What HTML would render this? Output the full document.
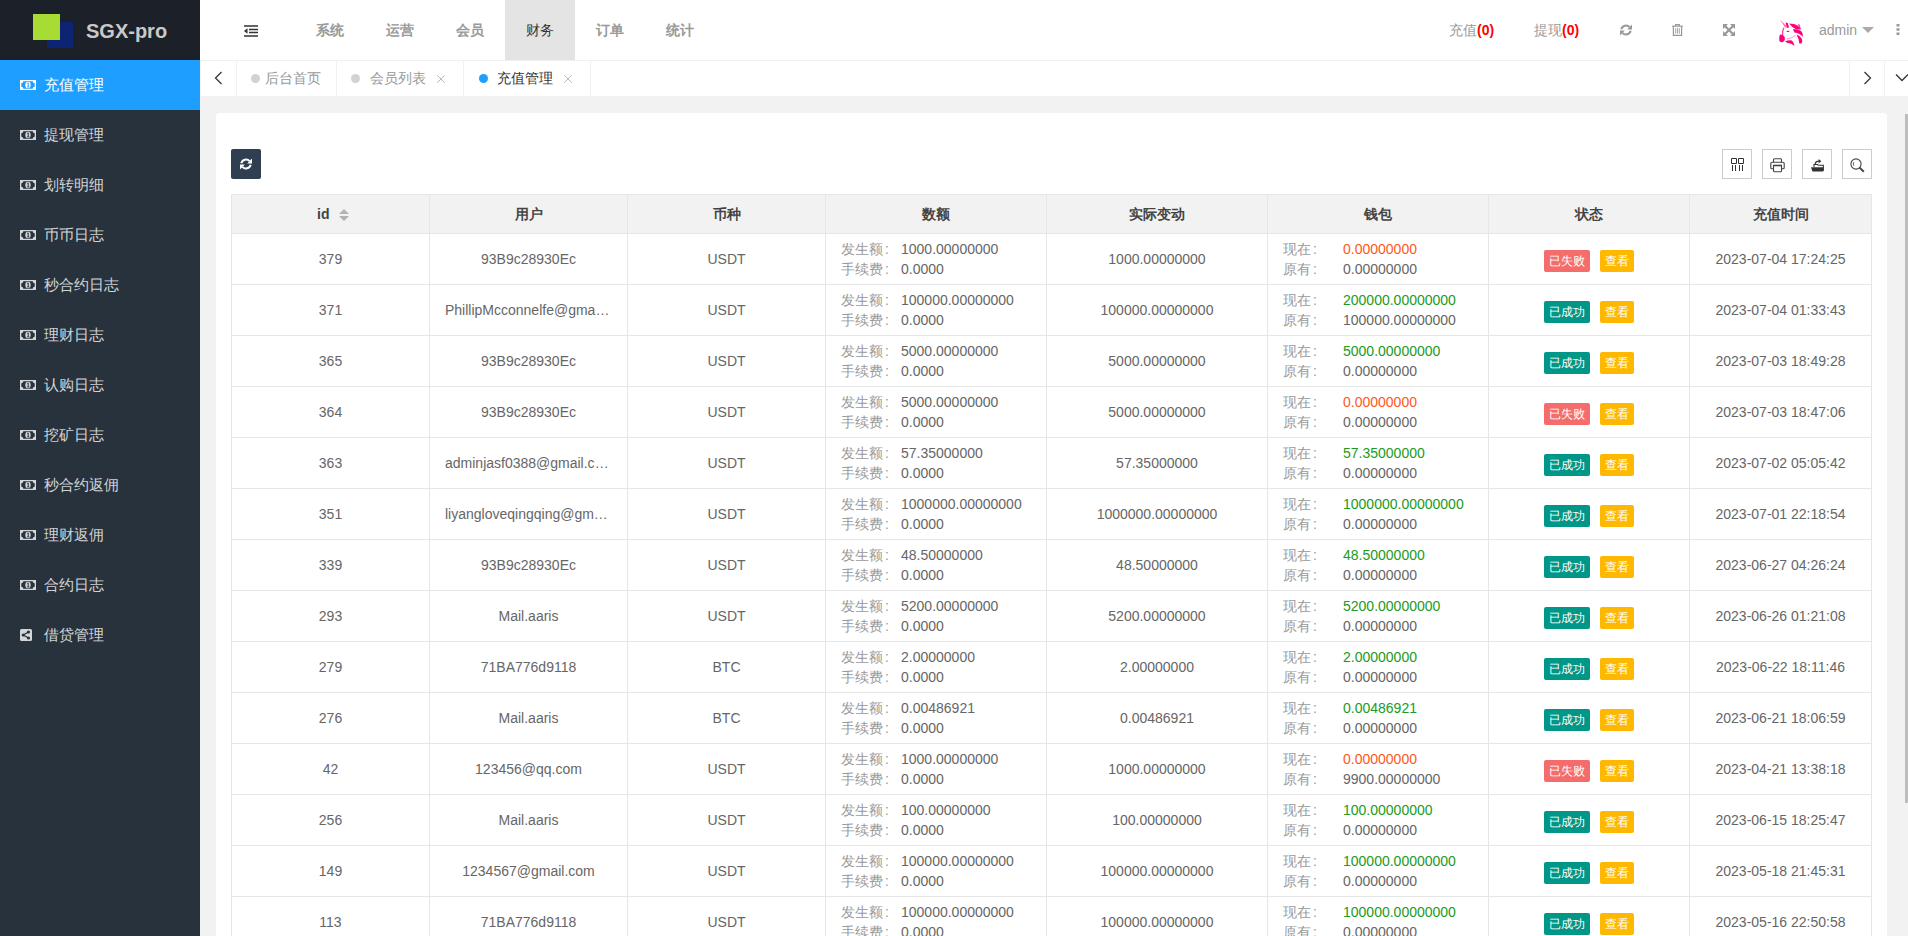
<!DOCTYPE html>
<html><head><meta charset="utf-8"><title>SGX-pro</title>
<style>
*{box-sizing:border-box;margin:0;padding:0}
html,body{width:1908px;height:936px;overflow:hidden;background:#f2f2f2;font-family:"Liberation Sans",sans-serif;font-size:14px;color:#666}
.abs{position:absolute}
#side{position:absolute;left:0;top:0;width:200px;height:936px;background:#28323c}
#logo{position:absolute;left:0;top:0;width:200px;height:60px;background:#1b2029}
#logo .sq1{position:absolute;left:47px;top:22px;width:26px;height:26px;background:#0c2471}
#logo .sq2{position:absolute;left:33px;top:14px;width:27px;height:26px;background:#a6dc33}
#logo .t{position:absolute;left:86px;top:19px;font-size:20px;font-weight:bold;color:#c9c9c9;line-height:24px}
.mitem{position:absolute;left:0;width:200px;height:50px;color:rgba(255,255,255,.8);--bg:#28323c}
.mitem.on{background:#1e9fff;color:#fff;--bg:#1e9fff}
.mitem .mi{position:absolute;left:20px;top:20px}
.mitem .share{left:20px;top:19px}
.mitem span{position:absolute;left:44px;top:15px;line-height:20px;font-size:15px}
#head{position:absolute;left:200px;top:0;width:1708px;height:60px;background:#fff}
.nav{position:absolute;top:0;height:60px;width:70px;text-align:center;line-height:60px;color:#999;font-size:14px;font-weight:bold}
.nav.on{background:#e4e4e4;color:#333;font-weight:normal}
#tabs{position:absolute;left:200px;top:60px;width:1708px;height:36px;background:#fff;border-top:1px solid #f0f0f0}
.tab{position:absolute;top:0;height:35px;border-right:1px solid #f0f0f0;line-height:35px;color:#999;font-size:14px}
.dot{position:absolute;top:13px;width:9px;height:9px;border-radius:50%;background:#d2d2d2}
#card{position:absolute;left:216px;top:113px;width:1671px;height:900px;background:#fff;border-radius:4px}
.tb{position:absolute;top:149px;width:30px;height:30px;border:1px solid #ccc;background:#fff}
.hl{position:absolute;height:1px;background:#e6e6e6}
.vl{position:absolute;width:1px;background:#e6e6e6}
.th{position:absolute;top:195px;height:38px;line-height:38px;text-align:center;font-weight:bold;color:#444}
.c{position:absolute;text-align:center;line-height:20px;color:#666;white-space:nowrap;overflow:hidden;text-overflow:ellipsis}
.lb{position:absolute;line-height:20px;color:#999;white-space:nowrap}
.vv{position:absolute;line-height:20px;color:#666;white-space:nowrap}
.red{color:#ff5722}.grn{color:#229a22}
.co{font-style:normal;margin-left:2px}
.bdg{position:absolute;height:22px;line-height:22px;border-radius:2px;color:#fff;font-size:12px;text-align:center}
</style></head><body>

<div id="side"><div id="logo"><div class="sq1"></div><div class="sq2"></div><div class="t">SGX-pro</div></div>
<div class="mitem on" style="top:60px"><svg class="mi" width="16" height="10" viewBox="0 0 16 10"><rect x="0" y="0" width="16" height="10" fill="currentColor"/><path d="M3.3 1.3 H12.7 A2 2 0 0 0 14.7 3.3 V6.7 A2 2 0 0 0 12.7 8.7 H3.3 A2 2 0 0 0 1.3 6.7 V3.3 A2 2 0 0 0 3.3 1.3 Z" fill="var(--bg)"/><ellipse cx="8" cy="5" rx="2.7" ry="3.2" fill="currentColor"/><path d="M7.2 3.4 L8.2 2.9 V6.8 M7.1 6.9 H9.3" stroke="var(--bg)" stroke-width="1" fill="none"/></svg><span>充值管理</span></div>
<div class="mitem" style="top:110px"><svg class="mi" width="16" height="10" viewBox="0 0 16 10"><rect x="0" y="0" width="16" height="10" fill="currentColor"/><path d="M3.3 1.3 H12.7 A2 2 0 0 0 14.7 3.3 V6.7 A2 2 0 0 0 12.7 8.7 H3.3 A2 2 0 0 0 1.3 6.7 V3.3 A2 2 0 0 0 3.3 1.3 Z" fill="var(--bg)"/><ellipse cx="8" cy="5" rx="2.7" ry="3.2" fill="currentColor"/><path d="M7.2 3.4 L8.2 2.9 V6.8 M7.1 6.9 H9.3" stroke="var(--bg)" stroke-width="1" fill="none"/></svg><span>提现管理</span></div>
<div class="mitem" style="top:160px"><svg class="mi" width="16" height="10" viewBox="0 0 16 10"><rect x="0" y="0" width="16" height="10" fill="currentColor"/><path d="M3.3 1.3 H12.7 A2 2 0 0 0 14.7 3.3 V6.7 A2 2 0 0 0 12.7 8.7 H3.3 A2 2 0 0 0 1.3 6.7 V3.3 A2 2 0 0 0 3.3 1.3 Z" fill="var(--bg)"/><ellipse cx="8" cy="5" rx="2.7" ry="3.2" fill="currentColor"/><path d="M7.2 3.4 L8.2 2.9 V6.8 M7.1 6.9 H9.3" stroke="var(--bg)" stroke-width="1" fill="none"/></svg><span>划转明细</span></div>
<div class="mitem" style="top:210px"><svg class="mi" width="16" height="10" viewBox="0 0 16 10"><rect x="0" y="0" width="16" height="10" fill="currentColor"/><path d="M3.3 1.3 H12.7 A2 2 0 0 0 14.7 3.3 V6.7 A2 2 0 0 0 12.7 8.7 H3.3 A2 2 0 0 0 1.3 6.7 V3.3 A2 2 0 0 0 3.3 1.3 Z" fill="var(--bg)"/><ellipse cx="8" cy="5" rx="2.7" ry="3.2" fill="currentColor"/><path d="M7.2 3.4 L8.2 2.9 V6.8 M7.1 6.9 H9.3" stroke="var(--bg)" stroke-width="1" fill="none"/></svg><span>币币日志</span></div>
<div class="mitem" style="top:260px"><svg class="mi" width="16" height="10" viewBox="0 0 16 10"><rect x="0" y="0" width="16" height="10" fill="currentColor"/><path d="M3.3 1.3 H12.7 A2 2 0 0 0 14.7 3.3 V6.7 A2 2 0 0 0 12.7 8.7 H3.3 A2 2 0 0 0 1.3 6.7 V3.3 A2 2 0 0 0 3.3 1.3 Z" fill="var(--bg)"/><ellipse cx="8" cy="5" rx="2.7" ry="3.2" fill="currentColor"/><path d="M7.2 3.4 L8.2 2.9 V6.8 M7.1 6.9 H9.3" stroke="var(--bg)" stroke-width="1" fill="none"/></svg><span>秒合约日志</span></div>
<div class="mitem" style="top:310px"><svg class="mi" width="16" height="10" viewBox="0 0 16 10"><rect x="0" y="0" width="16" height="10" fill="currentColor"/><path d="M3.3 1.3 H12.7 A2 2 0 0 0 14.7 3.3 V6.7 A2 2 0 0 0 12.7 8.7 H3.3 A2 2 0 0 0 1.3 6.7 V3.3 A2 2 0 0 0 3.3 1.3 Z" fill="var(--bg)"/><ellipse cx="8" cy="5" rx="2.7" ry="3.2" fill="currentColor"/><path d="M7.2 3.4 L8.2 2.9 V6.8 M7.1 6.9 H9.3" stroke="var(--bg)" stroke-width="1" fill="none"/></svg><span>理财日志</span></div>
<div class="mitem" style="top:360px"><svg class="mi" width="16" height="10" viewBox="0 0 16 10"><rect x="0" y="0" width="16" height="10" fill="currentColor"/><path d="M3.3 1.3 H12.7 A2 2 0 0 0 14.7 3.3 V6.7 A2 2 0 0 0 12.7 8.7 H3.3 A2 2 0 0 0 1.3 6.7 V3.3 A2 2 0 0 0 3.3 1.3 Z" fill="var(--bg)"/><ellipse cx="8" cy="5" rx="2.7" ry="3.2" fill="currentColor"/><path d="M7.2 3.4 L8.2 2.9 V6.8 M7.1 6.9 H9.3" stroke="var(--bg)" stroke-width="1" fill="none"/></svg><span>认购日志</span></div>
<div class="mitem" style="top:410px"><svg class="mi" width="16" height="10" viewBox="0 0 16 10"><rect x="0" y="0" width="16" height="10" fill="currentColor"/><path d="M3.3 1.3 H12.7 A2 2 0 0 0 14.7 3.3 V6.7 A2 2 0 0 0 12.7 8.7 H3.3 A2 2 0 0 0 1.3 6.7 V3.3 A2 2 0 0 0 3.3 1.3 Z" fill="var(--bg)"/><ellipse cx="8" cy="5" rx="2.7" ry="3.2" fill="currentColor"/><path d="M7.2 3.4 L8.2 2.9 V6.8 M7.1 6.9 H9.3" stroke="var(--bg)" stroke-width="1" fill="none"/></svg><span>挖矿日志</span></div>
<div class="mitem" style="top:460px"><svg class="mi" width="16" height="10" viewBox="0 0 16 10"><rect x="0" y="0" width="16" height="10" fill="currentColor"/><path d="M3.3 1.3 H12.7 A2 2 0 0 0 14.7 3.3 V6.7 A2 2 0 0 0 12.7 8.7 H3.3 A2 2 0 0 0 1.3 6.7 V3.3 A2 2 0 0 0 3.3 1.3 Z" fill="var(--bg)"/><ellipse cx="8" cy="5" rx="2.7" ry="3.2" fill="currentColor"/><path d="M7.2 3.4 L8.2 2.9 V6.8 M7.1 6.9 H9.3" stroke="var(--bg)" stroke-width="1" fill="none"/></svg><span>秒合约返佣</span></div>
<div class="mitem" style="top:510px"><svg class="mi" width="16" height="10" viewBox="0 0 16 10"><rect x="0" y="0" width="16" height="10" fill="currentColor"/><path d="M3.3 1.3 H12.7 A2 2 0 0 0 14.7 3.3 V6.7 A2 2 0 0 0 12.7 8.7 H3.3 A2 2 0 0 0 1.3 6.7 V3.3 A2 2 0 0 0 3.3 1.3 Z" fill="var(--bg)"/><ellipse cx="8" cy="5" rx="2.7" ry="3.2" fill="currentColor"/><path d="M7.2 3.4 L8.2 2.9 V6.8 M7.1 6.9 H9.3" stroke="var(--bg)" stroke-width="1" fill="none"/></svg><span>理财返佣</span></div>
<div class="mitem" style="top:560px"><svg class="mi" width="16" height="10" viewBox="0 0 16 10"><rect x="0" y="0" width="16" height="10" fill="currentColor"/><path d="M3.3 1.3 H12.7 A2 2 0 0 0 14.7 3.3 V6.7 A2 2 0 0 0 12.7 8.7 H3.3 A2 2 0 0 0 1.3 6.7 V3.3 A2 2 0 0 0 3.3 1.3 Z" fill="var(--bg)"/><ellipse cx="8" cy="5" rx="2.7" ry="3.2" fill="currentColor"/><path d="M7.2 3.4 L8.2 2.9 V6.8 M7.1 6.9 H9.3" stroke="var(--bg)" stroke-width="1" fill="none"/></svg><span>合约日志</span></div>
<div class="mitem" style="top:610px"><svg class="mi share" width="12" height="12" viewBox="0 0 12 12"><rect x="0" y="0" width="12" height="12" rx="1.5" fill="currentColor"/><circle cx="3.2" cy="6" r="1.6" fill="var(--bg)"/><circle cx="8.5" cy="3" r="1.6" fill="var(--bg)"/><circle cx="8.5" cy="9" r="1.6" fill="var(--bg)"/><path d="M3.2 6 L8.5 3 M3.2 6 L8.5 9" stroke="var(--bg)" stroke-width="1.2"/></svg><span>借贷管理</span></div>
</div>
<div id="head">
<svg class="abs" style="left:43px;top:25px" width="16" height="12" viewBox="0 0 16 12"><path d="M1 1H15M6 4.5H15M6 7.5H15M1 11H15" stroke="#333" stroke-width="1.6"/><path d="M4.5 3.3 L1 6 L4.5 8.7Z" fill="#333"/></svg>
<div class="nav" style="left:95px">系统</div>
<div class="nav" style="left:165px">运营</div>
<div class="nav" style="left:235px">会员</div>
<div class="nav on" style="left:305px">财务</div>
<div class="nav" style="left:375px">订单</div>
<div class="nav" style="left:445px">统计</div>
<div class="abs" style="left:1249px;top:20px;line-height:20px;color:#999">充值<b style="color:#ff0000">(0)</b></div>
<div class="abs" style="left:1334px;top:20px;line-height:20px;color:#999">提现<b style="color:#ff0000">(0)</b></div>
<svg class="abs" style="left:1420px;top:24px" width="12" height="12" viewBox="0 0 12 12"><path d="M1.3 5.2 A4.8 4.8 0 0 1 9.6 3.2" stroke="#999" stroke-width="2" fill="none"/><path d="M12 0.6 V5.4 H7.2Z" fill="#999"/><path d="M10.7 6.8 A4.8 4.8 0 0 1 2.4 8.8" stroke="#999" stroke-width="2" fill="none"/><path d="M0 11.4 V6.6 H4.8Z" fill="#999"/></svg>
<svg class="abs" style="left:1472px;top:24px" width="11" height="12" viewBox="0 0 11 12"><path d="M0 2.2 H11" stroke="#999" stroke-width="1.2"/><path d="M3.6 2 V0.6 H7.4 V2" stroke="#999" stroke-width="1.1" fill="none"/><path d="M1.4 2.6 V11.4 H9.6 V2.6" stroke="#999" stroke-width="1.2" fill="none"/><path d="M3.7 4.2 V9.6 M5.5 4.2 V9.6 M7.3 4.2 V9.6" stroke="#999" stroke-width="0.9"/></svg>
<svg class="abs" style="left:1523px;top:24px" width="12" height="12" viewBox="0 0 12 12"><path d="M0 0 H5 L0 5Z M12 0 V5 L7 0Z M12 12 H7 L12 7Z M0 12 V7 L5 12Z" fill="#999"/><path d="M1.5 1.5 L10.5 10.5 M10.5 1.5 L1.5 10.5" stroke="#999" stroke-width="2.2"/></svg>
<svg class="abs" style="left:1575px;top:15px" width="35" height="35" viewBox="0 0 35 35" fill="#ff007a">
<path d="M4.8 4.6 L11.8 11.2 L10.2 12.8Z" opacity=".55"/>
<path d="M10.6 7.6 L12.8 8 L14 12.4 L11.9 13Z"/>
<path d="M14 8.4 Q19.5 8.4 23 10.8 L25.8 14.6 L21 14.2 Q17.2 12.6 14 8.4Z"/>
<path d="M23.2 8.4 L24.6 9.6 L26 14.2 L23.8 13.4Z" opacity=".75"/>
<path d="M18 14 Q24 14 26.8 16.8 Q28.2 19 27.8 22 Q25 18.4 19.4 17.6Z"/>
<path d="M21.6 19.6 Q26 21.4 27.2 25 Q27.4 27.4 26.4 28.6 L24.4 28.4 Q23.8 23.8 21.6 19.6Z"/>
<path d="M8.8 12.8 Q7 16.4 7.6 20.2" stroke="#ff007a" stroke-width="1.3" fill="none" opacity=".75"/>
<path d="M5.2 19.6 Q8.6 19.4 9.8 22.6 Q10.4 26.4 7.4 27.2 Q4 27.6 4.2 23.4 Q4.2 20.6 5.2 19.6Z"/>
<path d="M10 26.4 Q13.6 24.6 17 25.4 Q18.8 27.4 19.6 31 Q16.6 28.2 12 27.8Z"/>
<ellipse cx="13" cy="16.4" rx="1.4" ry="0.7"/>
<path d="M11.6 24 Q17 23.4 20.4 20.4" stroke="#ff007a" stroke-width=".9" fill="none" opacity=".45"/>
</svg>
<div class="abs" style="left:1619px;top:20px;line-height:20px;color:#999;font-size:14px">admin</div>
<svg class="abs" style="left:1662px;top:27px" width="12" height="6" viewBox="0 0 12 6"><path d="M0 0 H12 L6 6Z" fill="#aaa"/></svg>
<svg class="abs" style="left:1696px;top:24px" width="4" height="11" viewBox="0 0 4 11"><path d="M0.5 0 H3.5 V2.6 H0.5Z M0.5 4.2 H3.5 V6.8 H0.5Z M0.5 8.4 H3.5 V11 H0.5Z" fill="#999"/></svg>
</div>
<div id="tabs">
<div class="tab" style="left:0;width:37px;border-left:1px solid #f3f3f3"><svg class="abs" style="left:13px;top:10px" width="9" height="14" viewBox="0 0 9 14"><path d="M7.5 1 L1.5 7 L7.5 13" stroke="#333" stroke-width="1.25" fill="none"/></svg></div>
<div class="tab" style="left:37px;width:100px"><div class="dot" style="left:14px"></div><span class="abs" style="left:28px">后台首页</span></div>
<div class="tab" style="left:137px;width:127px"><div class="dot" style="left:14px"></div><span class="abs" style="left:33px">会员列表</span><svg class="abs" style="left:100px;top:14px" width="8" height="8" viewBox="0 0 8 8"><path d="M0.3 0.3 L7.7 7.7 M7.7 0.3 L0.3 7.7" stroke="#b8b8b8" stroke-width="1"/></svg></div>
<div class="tab" style="left:264px;width:127px"><div class="dot" style="left:15px;background:#1e9fff"></div><span class="abs" style="left:33px;color:#333">充值管理</span><svg class="abs" style="left:100px;top:14px" width="8" height="8" viewBox="0 0 8 8"><path d="M0.3 0.3 L7.7 7.7 M7.7 0.3 L0.3 7.7" stroke="#b8b8b8" stroke-width="1"/></svg></div>
<div class="tab" style="left:1649px;width:36px;border-left:1px solid #f0f0f0"><svg class="abs" style="left:13px;top:10px" width="9" height="14" viewBox="0 0 9 14"><path d="M1.5 1 L7.5 7 L1.5 13" stroke="#333" stroke-width="1.25" fill="none"/></svg></div>
<div class="tab" style="left:1685px;width:30px;border-right:0"><svg class="abs" style="left:10px;top:12px" width="14" height="9" viewBox="0 0 14 9"><path d="M1 1.5 L7 7.5 L13 1.5" stroke="#333" stroke-width="1.25" fill="none"/></svg></div>
</div>
<div id="card"></div>
<div class="abs" style="left:231px;top:149px;width:30px;height:30px;background:#2f3f51;border-radius:2px"><svg class="abs" style="left:9px;top:9px" width="12" height="12" viewBox="0 0 12 12"><path d="M1.3 5.2 A4.8 4.8 0 0 1 9.6 3.2" stroke="#fff" stroke-width="2" fill="none"/><path d="M12 0.6 V5.4 H7.2Z" fill="#fff"/><path d="M10.7 6.8 A4.8 4.8 0 0 1 2.4 8.8" stroke="#fff" stroke-width="2" fill="none"/><path d="M0 11.4 V6.6 H4.8Z" fill="#fff"/></svg></div>
<div class="tb" style="left:1722px"><svg class="abs" style="left:0;top:0" width="28" height="28" viewBox="0 0 28 28"><path d="M8.5 8.5 H13.5 V13.5 H8.5Z M15.5 8.5 H20.5 V13.5 H15.5Z" stroke="#333" stroke-width="1" fill="none"/><path d="M9.5 15 V21 M12.5 15 V21 M16.5 15 V21 M19.5 15 V21" stroke="#333" stroke-width="1"/></svg></div>
<div class="tb" style="left:1762px"><svg class="abs" style="left:7px;top:8px" width="15" height="15" viewBox="0 0 15 15"><path d="M3.5 4.2 V1.8 Q3.5 0.8 4.5 0.8 H10.5 Q11.5 0.8 11.5 1.8 V4.2" stroke="#444" stroke-width="1.1" fill="none"/><path d="M3.3 10.8 H1.8 Q0.8 10.8 0.8 9.8 V5.6 Q0.8 4.2 2.2 4.2 H12.8 Q14.2 4.2 14.2 5.6 V9.8 Q14.2 10.8 13.2 10.8 H11.7" stroke="#444" stroke-width="1.1" fill="none"/><path d="M3.5 7.5 H11.5 V12.8 Q11.5 13.8 10.5 13.8 H4.5 Q3.5 13.8 3.5 12.8Z" stroke="#444" stroke-width="1.1" fill="none"/><path d="M3 7.5 H12" stroke="#444" stroke-width="1.6"/></svg></div>
<div class="tb" style="left:1802px"><svg class="abs" style="left:8px;top:9px" width="14" height="13" viewBox="0 0 14 13"><path d="M0 8.2 H12.5 L12 12.6 H1.4Z" fill="#333"/><path d="M3 8 V5.5 H6.5 L7.2 6.3 H12.3 V12" stroke="#333" stroke-width="1.1" fill="none"/><path d="M4.2 5 Q4.6 2.2 8 2.2" stroke="#333" stroke-width="1.2" fill="none"/><path d="M7.6 0 L10.3 2.2 L7.6 4.4Z" fill="#333"/></svg></div>
<div class="tb" style="left:1842px"><svg class="abs" style="left:7px;top:8px" width="15" height="15" viewBox="0 0 15 15"><circle cx="6" cy="6" r="5.1" stroke="#444" stroke-width="1.1" fill="none"/><path d="M9.6 9.6 L13.8 13.8" stroke="#444" stroke-width="2"/><path d="M3.6 4.2 Q3 6 3.8 7.6" stroke="#444" stroke-width=".8" fill="none"/></svg></div>
<div class="abs" style="left:231px;top:194px;width:1641px;height:39px;background:#f2f2f2"></div>
<div class="th" style="left:317px;width:20px;text-align:left">id</div>
<svg class="abs" style="left:339px;top:209px" width="10" height="12" viewBox="0 0 10 12"><path d="M0 5 L5 0 L10 5Z M0 7 H10 L5 12Z" fill="#b2b2b2"/></svg>
<div class="th" style="left:430px;width:197px">用户</div>
<div class="th" style="left:628px;width:197px">币种</div>
<div class="th" style="left:826px;width:220px">数额</div>
<div class="th" style="left:1047px;width:220px">实际变动</div>
<div class="th" style="left:1268px;width:220px">钱包</div>
<div class="th" style="left:1489px;width:200px">状态</div>
<div class="th" style="left:1690px;width:181px">充值时间</div>
<div class="vl" style="left:231px;top:194px;height:742px"></div>
<div class="vl" style="left:429px;top:194px;height:742px"></div>
<div class="vl" style="left:627px;top:194px;height:742px"></div>
<div class="vl" style="left:825px;top:194px;height:742px"></div>
<div class="vl" style="left:1046px;top:194px;height:742px"></div>
<div class="vl" style="left:1267px;top:194px;height:742px"></div>
<div class="vl" style="left:1488px;top:194px;height:742px"></div>
<div class="vl" style="left:1689px;top:194px;height:742px"></div>
<div class="vl" style="left:1871px;top:194px;height:742px"></div>
<div class="hl" style="left:231px;top:194px;width:1641px"></div>
<div class="hl" style="left:231px;top:233px;width:1641px"></div>
<div class="hl" style="left:231px;top:284px;width:1641px"></div>
<div class="hl" style="left:231px;top:335px;width:1641px"></div>
<div class="hl" style="left:231px;top:386px;width:1641px"></div>
<div class="hl" style="left:231px;top:437px;width:1641px"></div>
<div class="hl" style="left:231px;top:488px;width:1641px"></div>
<div class="hl" style="left:231px;top:539px;width:1641px"></div>
<div class="hl" style="left:231px;top:590px;width:1641px"></div>
<div class="hl" style="left:231px;top:641px;width:1641px"></div>
<div class="hl" style="left:231px;top:692px;width:1641px"></div>
<div class="hl" style="left:231px;top:743px;width:1641px"></div>
<div class="hl" style="left:231px;top:794px;width:1641px"></div>
<div class="hl" style="left:231px;top:845px;width:1641px"></div>
<div class="hl" style="left:231px;top:896px;width:1641px"></div>
<div class="hl" style="left:231px;top:947px;width:1641px"></div>
<div class="c" style="left:247px;width:167px;top:249px">379</div>
<div class="c" style="left:445px;width:167px;top:249px">93B9c28930Ec</div>
<div class="c" style="left:643px;width:167px;top:249px">USDT</div>
<div class="c" style="left:1062px;width:190px;top:249px">1000.00000000</div>
<div class="c" style="left:1705px;width:151px;top:249px">2023-07-04 17:24:25</div>
<div class="lb" style="left:841px;top:239px">发生额<i class="co">:</i></div><div class="vv" style="left:901px;top:239px">1000.00000000</div>
<div class="lb" style="left:841px;top:259px">手续费<i class="co">:</i></div><div class="vv" style="left:901px;top:259px">0.0000</div>
<div class="lb" style="left:1283px;top:239px">现在<i class="co">:</i></div><div class="vv red" style="left:1343px;top:239px">0.00000000</div>
<div class="lb" style="left:1283px;top:259px">原有<i class="co">:</i></div><div class="vv" style="left:1343px;top:259px">0.00000000</div>
<div class="bdg" style="left:1544px;top:250px;width:46px;background:#f56c6c">已失败</div>
<div class="bdg" style="left:1600px;top:250px;width:34px;background:#ffb800">查看</div>
<div class="c" style="left:247px;width:167px;top:300px">371</div>
<div class="c" style="left:445px;width:167px;top:300px">PhillipMcconnelfe@gmail.com</div>
<div class="c" style="left:643px;width:167px;top:300px">USDT</div>
<div class="c" style="left:1062px;width:190px;top:300px">100000.00000000</div>
<div class="c" style="left:1705px;width:151px;top:300px">2023-07-04 01:33:43</div>
<div class="lb" style="left:841px;top:290px">发生额<i class="co">:</i></div><div class="vv" style="left:901px;top:290px">100000.00000000</div>
<div class="lb" style="left:841px;top:310px">手续费<i class="co">:</i></div><div class="vv" style="left:901px;top:310px">0.0000</div>
<div class="lb" style="left:1283px;top:290px">现在<i class="co">:</i></div><div class="vv grn" style="left:1343px;top:290px">200000.00000000</div>
<div class="lb" style="left:1283px;top:310px">原有<i class="co">:</i></div><div class="vv" style="left:1343px;top:310px">100000.00000000</div>
<div class="bdg" style="left:1544px;top:301px;width:46px;background:#009688">已成功</div>
<div class="bdg" style="left:1600px;top:301px;width:34px;background:#ffb800">查看</div>
<div class="c" style="left:247px;width:167px;top:351px">365</div>
<div class="c" style="left:445px;width:167px;top:351px">93B9c28930Ec</div>
<div class="c" style="left:643px;width:167px;top:351px">USDT</div>
<div class="c" style="left:1062px;width:190px;top:351px">5000.00000000</div>
<div class="c" style="left:1705px;width:151px;top:351px">2023-07-03 18:49:28</div>
<div class="lb" style="left:841px;top:341px">发生额<i class="co">:</i></div><div class="vv" style="left:901px;top:341px">5000.00000000</div>
<div class="lb" style="left:841px;top:361px">手续费<i class="co">:</i></div><div class="vv" style="left:901px;top:361px">0.0000</div>
<div class="lb" style="left:1283px;top:341px">现在<i class="co">:</i></div><div class="vv grn" style="left:1343px;top:341px">5000.00000000</div>
<div class="lb" style="left:1283px;top:361px">原有<i class="co">:</i></div><div class="vv" style="left:1343px;top:361px">0.00000000</div>
<div class="bdg" style="left:1544px;top:352px;width:46px;background:#009688">已成功</div>
<div class="bdg" style="left:1600px;top:352px;width:34px;background:#ffb800">查看</div>
<div class="c" style="left:247px;width:167px;top:402px">364</div>
<div class="c" style="left:445px;width:167px;top:402px">93B9c28930Ec</div>
<div class="c" style="left:643px;width:167px;top:402px">USDT</div>
<div class="c" style="left:1062px;width:190px;top:402px">5000.00000000</div>
<div class="c" style="left:1705px;width:151px;top:402px">2023-07-03 18:47:06</div>
<div class="lb" style="left:841px;top:392px">发生额<i class="co">:</i></div><div class="vv" style="left:901px;top:392px">5000.00000000</div>
<div class="lb" style="left:841px;top:412px">手续费<i class="co">:</i></div><div class="vv" style="left:901px;top:412px">0.0000</div>
<div class="lb" style="left:1283px;top:392px">现在<i class="co">:</i></div><div class="vv red" style="left:1343px;top:392px">0.00000000</div>
<div class="lb" style="left:1283px;top:412px">原有<i class="co">:</i></div><div class="vv" style="left:1343px;top:412px">0.00000000</div>
<div class="bdg" style="left:1544px;top:403px;width:46px;background:#f56c6c">已失败</div>
<div class="bdg" style="left:1600px;top:403px;width:34px;background:#ffb800">查看</div>
<div class="c" style="left:247px;width:167px;top:453px">363</div>
<div class="c" style="left:445px;width:167px;top:453px">adminjasf0388@gmail.com</div>
<div class="c" style="left:643px;width:167px;top:453px">USDT</div>
<div class="c" style="left:1062px;width:190px;top:453px">57.35000000</div>
<div class="c" style="left:1705px;width:151px;top:453px">2023-07-02 05:05:42</div>
<div class="lb" style="left:841px;top:443px">发生额<i class="co">:</i></div><div class="vv" style="left:901px;top:443px">57.35000000</div>
<div class="lb" style="left:841px;top:463px">手续费<i class="co">:</i></div><div class="vv" style="left:901px;top:463px">0.0000</div>
<div class="lb" style="left:1283px;top:443px">现在<i class="co">:</i></div><div class="vv grn" style="left:1343px;top:443px">57.35000000</div>
<div class="lb" style="left:1283px;top:463px">原有<i class="co">:</i></div><div class="vv" style="left:1343px;top:463px">0.00000000</div>
<div class="bdg" style="left:1544px;top:454px;width:46px;background:#009688">已成功</div>
<div class="bdg" style="left:1600px;top:454px;width:34px;background:#ffb800">查看</div>
<div class="c" style="left:247px;width:167px;top:504px">351</div>
<div class="c" style="left:445px;width:167px;top:504px">liyangloveqingqing@gmail.com</div>
<div class="c" style="left:643px;width:167px;top:504px">USDT</div>
<div class="c" style="left:1062px;width:190px;top:504px">1000000.00000000</div>
<div class="c" style="left:1705px;width:151px;top:504px">2023-07-01 22:18:54</div>
<div class="lb" style="left:841px;top:494px">发生额<i class="co">:</i></div><div class="vv" style="left:901px;top:494px">1000000.00000000</div>
<div class="lb" style="left:841px;top:514px">手续费<i class="co">:</i></div><div class="vv" style="left:901px;top:514px">0.0000</div>
<div class="lb" style="left:1283px;top:494px">现在<i class="co">:</i></div><div class="vv grn" style="left:1343px;top:494px">1000000.00000000</div>
<div class="lb" style="left:1283px;top:514px">原有<i class="co">:</i></div><div class="vv" style="left:1343px;top:514px">0.00000000</div>
<div class="bdg" style="left:1544px;top:505px;width:46px;background:#009688">已成功</div>
<div class="bdg" style="left:1600px;top:505px;width:34px;background:#ffb800">查看</div>
<div class="c" style="left:247px;width:167px;top:555px">339</div>
<div class="c" style="left:445px;width:167px;top:555px">93B9c28930Ec</div>
<div class="c" style="left:643px;width:167px;top:555px">USDT</div>
<div class="c" style="left:1062px;width:190px;top:555px">48.50000000</div>
<div class="c" style="left:1705px;width:151px;top:555px">2023-06-27 04:26:24</div>
<div class="lb" style="left:841px;top:545px">发生额<i class="co">:</i></div><div class="vv" style="left:901px;top:545px">48.50000000</div>
<div class="lb" style="left:841px;top:565px">手续费<i class="co">:</i></div><div class="vv" style="left:901px;top:565px">0.0000</div>
<div class="lb" style="left:1283px;top:545px">现在<i class="co">:</i></div><div class="vv grn" style="left:1343px;top:545px">48.50000000</div>
<div class="lb" style="left:1283px;top:565px">原有<i class="co">:</i></div><div class="vv" style="left:1343px;top:565px">0.00000000</div>
<div class="bdg" style="left:1544px;top:556px;width:46px;background:#009688">已成功</div>
<div class="bdg" style="left:1600px;top:556px;width:34px;background:#ffb800">查看</div>
<div class="c" style="left:247px;width:167px;top:606px">293</div>
<div class="c" style="left:445px;width:167px;top:606px">Mail.aaris</div>
<div class="c" style="left:643px;width:167px;top:606px">USDT</div>
<div class="c" style="left:1062px;width:190px;top:606px">5200.00000000</div>
<div class="c" style="left:1705px;width:151px;top:606px">2023-06-26 01:21:08</div>
<div class="lb" style="left:841px;top:596px">发生额<i class="co">:</i></div><div class="vv" style="left:901px;top:596px">5200.00000000</div>
<div class="lb" style="left:841px;top:616px">手续费<i class="co">:</i></div><div class="vv" style="left:901px;top:616px">0.0000</div>
<div class="lb" style="left:1283px;top:596px">现在<i class="co">:</i></div><div class="vv grn" style="left:1343px;top:596px">5200.00000000</div>
<div class="lb" style="left:1283px;top:616px">原有<i class="co">:</i></div><div class="vv" style="left:1343px;top:616px">0.00000000</div>
<div class="bdg" style="left:1544px;top:607px;width:46px;background:#009688">已成功</div>
<div class="bdg" style="left:1600px;top:607px;width:34px;background:#ffb800">查看</div>
<div class="c" style="left:247px;width:167px;top:657px">279</div>
<div class="c" style="left:445px;width:167px;top:657px">71BA776d9118</div>
<div class="c" style="left:643px;width:167px;top:657px">BTC</div>
<div class="c" style="left:1062px;width:190px;top:657px">2.00000000</div>
<div class="c" style="left:1705px;width:151px;top:657px">2023-06-22 18:11:46</div>
<div class="lb" style="left:841px;top:647px">发生额<i class="co">:</i></div><div class="vv" style="left:901px;top:647px">2.00000000</div>
<div class="lb" style="left:841px;top:667px">手续费<i class="co">:</i></div><div class="vv" style="left:901px;top:667px">0.0000</div>
<div class="lb" style="left:1283px;top:647px">现在<i class="co">:</i></div><div class="vv grn" style="left:1343px;top:647px">2.00000000</div>
<div class="lb" style="left:1283px;top:667px">原有<i class="co">:</i></div><div class="vv" style="left:1343px;top:667px">0.00000000</div>
<div class="bdg" style="left:1544px;top:658px;width:46px;background:#009688">已成功</div>
<div class="bdg" style="left:1600px;top:658px;width:34px;background:#ffb800">查看</div>
<div class="c" style="left:247px;width:167px;top:708px">276</div>
<div class="c" style="left:445px;width:167px;top:708px">Mail.aaris</div>
<div class="c" style="left:643px;width:167px;top:708px">BTC</div>
<div class="c" style="left:1062px;width:190px;top:708px">0.00486921</div>
<div class="c" style="left:1705px;width:151px;top:708px">2023-06-21 18:06:59</div>
<div class="lb" style="left:841px;top:698px">发生额<i class="co">:</i></div><div class="vv" style="left:901px;top:698px">0.00486921</div>
<div class="lb" style="left:841px;top:718px">手续费<i class="co">:</i></div><div class="vv" style="left:901px;top:718px">0.0000</div>
<div class="lb" style="left:1283px;top:698px">现在<i class="co">:</i></div><div class="vv grn" style="left:1343px;top:698px">0.00486921</div>
<div class="lb" style="left:1283px;top:718px">原有<i class="co">:</i></div><div class="vv" style="left:1343px;top:718px">0.00000000</div>
<div class="bdg" style="left:1544px;top:709px;width:46px;background:#009688">已成功</div>
<div class="bdg" style="left:1600px;top:709px;width:34px;background:#ffb800">查看</div>
<div class="c" style="left:247px;width:167px;top:759px">42</div>
<div class="c" style="left:445px;width:167px;top:759px">123456@qq.com</div>
<div class="c" style="left:643px;width:167px;top:759px">USDT</div>
<div class="c" style="left:1062px;width:190px;top:759px">1000.00000000</div>
<div class="c" style="left:1705px;width:151px;top:759px">2023-04-21 13:38:18</div>
<div class="lb" style="left:841px;top:749px">发生额<i class="co">:</i></div><div class="vv" style="left:901px;top:749px">1000.00000000</div>
<div class="lb" style="left:841px;top:769px">手续费<i class="co">:</i></div><div class="vv" style="left:901px;top:769px">0.0000</div>
<div class="lb" style="left:1283px;top:749px">现在<i class="co">:</i></div><div class="vv red" style="left:1343px;top:749px">0.00000000</div>
<div class="lb" style="left:1283px;top:769px">原有<i class="co">:</i></div><div class="vv" style="left:1343px;top:769px">9900.00000000</div>
<div class="bdg" style="left:1544px;top:760px;width:46px;background:#f56c6c">已失败</div>
<div class="bdg" style="left:1600px;top:760px;width:34px;background:#ffb800">查看</div>
<div class="c" style="left:247px;width:167px;top:810px">256</div>
<div class="c" style="left:445px;width:167px;top:810px">Mail.aaris</div>
<div class="c" style="left:643px;width:167px;top:810px">USDT</div>
<div class="c" style="left:1062px;width:190px;top:810px">100.00000000</div>
<div class="c" style="left:1705px;width:151px;top:810px">2023-06-15 18:25:47</div>
<div class="lb" style="left:841px;top:800px">发生额<i class="co">:</i></div><div class="vv" style="left:901px;top:800px">100.00000000</div>
<div class="lb" style="left:841px;top:820px">手续费<i class="co">:</i></div><div class="vv" style="left:901px;top:820px">0.0000</div>
<div class="lb" style="left:1283px;top:800px">现在<i class="co">:</i></div><div class="vv grn" style="left:1343px;top:800px">100.00000000</div>
<div class="lb" style="left:1283px;top:820px">原有<i class="co">:</i></div><div class="vv" style="left:1343px;top:820px">0.00000000</div>
<div class="bdg" style="left:1544px;top:811px;width:46px;background:#009688">已成功</div>
<div class="bdg" style="left:1600px;top:811px;width:34px;background:#ffb800">查看</div>
<div class="c" style="left:247px;width:167px;top:861px">149</div>
<div class="c" style="left:445px;width:167px;top:861px">1234567@gmail.com</div>
<div class="c" style="left:643px;width:167px;top:861px">USDT</div>
<div class="c" style="left:1062px;width:190px;top:861px">100000.00000000</div>
<div class="c" style="left:1705px;width:151px;top:861px">2023-05-18 21:45:31</div>
<div class="lb" style="left:841px;top:851px">发生额<i class="co">:</i></div><div class="vv" style="left:901px;top:851px">100000.00000000</div>
<div class="lb" style="left:841px;top:871px">手续费<i class="co">:</i></div><div class="vv" style="left:901px;top:871px">0.0000</div>
<div class="lb" style="left:1283px;top:851px">现在<i class="co">:</i></div><div class="vv grn" style="left:1343px;top:851px">100000.00000000</div>
<div class="lb" style="left:1283px;top:871px">原有<i class="co">:</i></div><div class="vv" style="left:1343px;top:871px">0.00000000</div>
<div class="bdg" style="left:1544px;top:862px;width:46px;background:#009688">已成功</div>
<div class="bdg" style="left:1600px;top:862px;width:34px;background:#ffb800">查看</div>
<div class="c" style="left:247px;width:167px;top:912px">113</div>
<div class="c" style="left:445px;width:167px;top:912px">71BA776d9118</div>
<div class="c" style="left:643px;width:167px;top:912px">USDT</div>
<div class="c" style="left:1062px;width:190px;top:912px">100000.00000000</div>
<div class="c" style="left:1705px;width:151px;top:912px">2023-05-16 22:50:58</div>
<div class="lb" style="left:841px;top:902px">发生额<i class="co">:</i></div><div class="vv" style="left:901px;top:902px">100000.00000000</div>
<div class="lb" style="left:841px;top:922px">手续费<i class="co">:</i></div><div class="vv" style="left:901px;top:922px">0.0000</div>
<div class="lb" style="left:1283px;top:902px">现在<i class="co">:</i></div><div class="vv grn" style="left:1343px;top:902px">100000.00000000</div>
<div class="lb" style="left:1283px;top:922px">原有<i class="co">:</i></div><div class="vv" style="left:1343px;top:922px">0.00000000</div>
<div class="bdg" style="left:1544px;top:913px;width:46px;background:#009688">已成功</div>
<div class="bdg" style="left:1600px;top:913px;width:34px;background:#ffb800">查看</div>
<div class="abs" style="left:1905px;top:114px;width:3px;height:689px;background:#bdbdbd"></div>
</body></html>
